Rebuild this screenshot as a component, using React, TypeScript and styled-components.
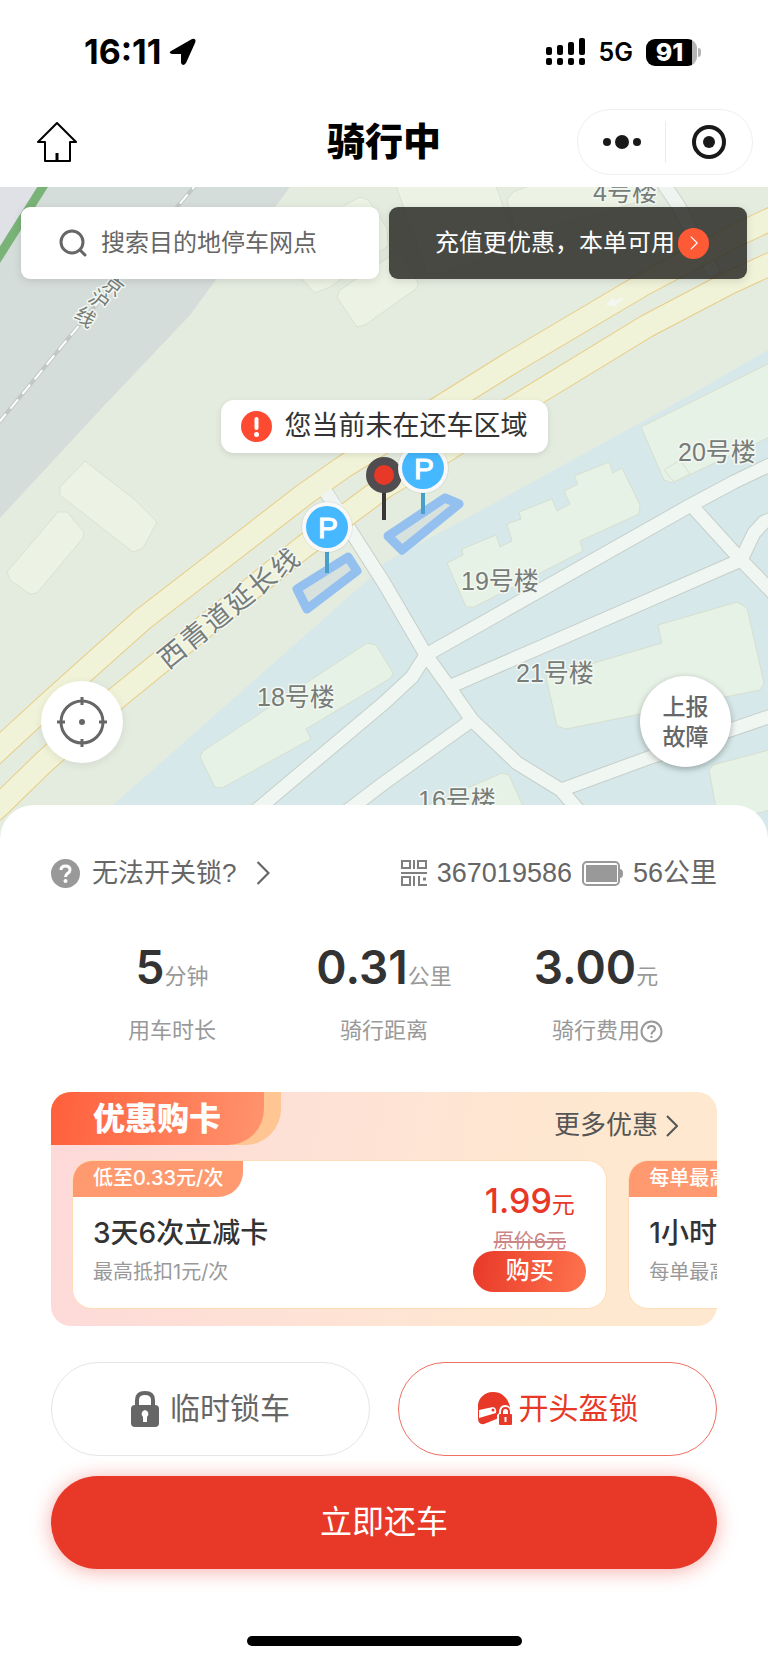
import React from 'react';
import styled, { createGlobalStyle, css } from 'styled-components';

const buildings = [
  '345,205 360,197 368,200 387,228 388,246 330,287 315,293 303,280 296,262',
  '337,297 340,290 392,255 401,255 418,283 417,288 365,325 357,327',
  '394,180 494,180 517,247 434,275 427,273',
  '507,200 513,192 545,180 662,180 656,197 517,236',
  '60,487 85,461 135,500 157,522 143,548 133,552 60,495',
  '7,572 58,512 67,512 84,532 83,538 37,593 30,594 10,580'
];

const blueBuildings = [
  '447,563 463,555 462,549 496,535 500,547 512,541 507,524 521,519 519,512 552,499 557,511 570,504 564,491 578,484 574,476 609,462 613,473 622,468 640,505 639,514 580,541 583,551 474,607 466,607',
  '641,427 780,358 780,432 672,483 664,480',
  '658,625 737,602 747,608 764,683 760,690 566,729 557,726 546,677 662,643',
  '709,770 713,765 780,747 780,807 719,824',
  '430,804 502,773 509,775 530,822 440,830',
  '200,757 203,751 367,643 376,645 393,673 391,678 306,729 311,739 222,788 215,787',
  '664,470 674,482 690,474 680,460'
];

const whiteRoads =
  'M320,483 L384,583 L426,655 L449,687 L472,720 L517,763 L561,790 L585,818 ' +
  'M426,655 L691,505 L734,482 L780,460 M449,687 L741,560 L754,533 L764,522 L780,516 ' +
  'M691,505 L741,560 L780,600 M426,655 L412,677 L384,703 L240,824 ' +
  'M472,720 L384,783 L330,824 M561,790 L651,757 L780,713';

const yellowRoads =
  'M-20,767 L0,748 L50,702 L88,668 L143,619 L305,494 L345,466 L429,414 L509,364 L644,284 L737,235 L790,210 ' +
  'M-20,822 L0,805 L43,763 L108,705 L157,665 L302,548 L384,487 L447,450 L506,412 L647,326 L729,283 L790,255';

const buildingLabels = [
  { text: '4号楼', x: 593, y: 201 },
  { text: '20号楼', x: 678, y: 461 },
  { text: '19号楼', x: 461, y: 590 },
  { text: '18号楼', x: 257, y: 706 },
  { text: '21号楼', x: 516, y: 682 },
  { text: '16号楼', x: 418, y: 809 }
];

const parkingPins = [
  { x: 423, y: 468 },
  { x: 327, y: 527 }
];

const stats = [
  { value: '5', unit: '分钟', label: '用车时长' },
  { value: '0.31', unit: '公里', label: '骑行距离' },
  { value: '3.00', unit: '元', label: '骑行费用', help: true }
];

const cards = [
  {
    tag: '低至0.33元/次',
    title: '3天6次立减卡',
    note: '最高抵扣1元/次',
    price: '1.99',
    original: '原价6元'
  },
  { tag: '每单最高减1元', title: '1小时畅骑卡', note: '每单最高减1元' }
];

const Chevron = ({ width = 12, height = 22 }) => (
  <svg
    width={width}
    height={height}
    viewBox="0 0 12 22"
    fill="none"
    stroke="currentColor"
    strokeWidth="2"
  >
    <path d="M1,1 L11,11 L1,21" />
  </svg>
);

const CityMap = () => (
  <MapDrawing viewBox="0 187 768 653" preserveAspectRatio="xMidYMin slice">
    <rect x="-100" y="180" width="1000" height="680" fill="#e4ebdf" />
    <polygon
      points="0,180 295,180 262,225 215,281 190,315 100,410 0,518"
      fill="#d5dddb"
    />
    <polygon points="0,180 42,180 0,250" fill="#e0e0e7" />
    <path d="M47,180 L-4,261" stroke="#79b377" strokeWidth="9" />
    <path
      d="M200,180 L177,207 L100,300 L-4,426"
      stroke="#c2c9c5"
      strokeWidth="4"
      fill="none"
    />
    <path
      d="M200,180 L177,207 L100,300 L-4,426"
      stroke="#fff"
      strokeWidth="2"
      strokeDasharray="12 7"
      fill="none"
    />
    <polygon
      points="780,343 687,397 500,500 384,563 370,578 113,805 60,850 780,850"
      fill="#d6e8e9"
    />
    <g fill="#ecf3e4" stroke="#dbe2d2" strokeWidth="1" strokeLinejoin="round">
      {buildings.map((points) => (
        <polygon key={points} points={points} />
      ))}
    </g>
    <g fill="#e7f2e6" stroke="#d6dfd0" strokeWidth="1" strokeLinejoin="round">
      {blueBuildings.map((points) => (
        <polygon key={points} points={points} />
      ))}
    </g>
    <g fill="none" strokeLinejoin="round">
      <path d={whiteRoads} stroke="#c6cfca" strokeWidth="15" />
      <path d={whiteRoads} stroke="#f0f6f1" strokeWidth="13" />
      <path d="M661,180 L678,205 L714,274" stroke="#cdd3cf" strokeWidth="15" />
      <path d="M661,180 L678,205 L714,274" stroke="#f0f4f1" strokeWidth="13" />
      <path d={yellowRoads} stroke="#e8cd85" strokeWidth="24" />
      <path d={yellowRoads} stroke="#f1f3d8" strokeWidth="22" />
      <path d="M326,492 L338,510" stroke="#f0f4f1" strokeWidth="13" />
    </g>
    <path
      d="M606,305 L613,297 L615,301 L622,297 L623,300 L616,304 L617,307 Z"
      fill="#f3f7f3"
    />
    <MapLabel>
      {buildingLabels.map(({ text, x, y }) => (
        <text key={text} x={x} y={y}>
          {text}
        </text>
      ))}
      <text
        transform="rotate(-39 229 609)"
        x="143 172 201 230 259 288"
        y="618"
        fontSize="27"
      >
        西青道延长线
      </text>
      <text x="101 87 73" y="286 300 317" rotate="36" fontSize="20">
        京沪线
      </text>
    </MapLabel>
    <g
      fill="rgba(200, 215, 225, 0.45)"
      stroke="#93c0ef"
      strokeWidth="9"
      strokeLinejoin="round"
    >
      <polygon points="297,589 348,557 357,571 307,609" />
      <polygon points="388,536 445,498 459,504 402,550" />
    </g>
    <path d="M384,490 V520" stroke="#39363a" strokeWidth="4" />
    <circle cx="384" cy="475" r="18" fill="#504c4f" />
    <circle cx="384" cy="475" r="10" fill="#e83828" />
    {parkingPins.map(({ x, y }) => (
      <g key={x}>
        <path d={`M${x},${y + 22} V${y + 46}`} stroke="#489fc9" strokeWidth="4" />
        <circle cx={x} cy={y} r="26" fill="#000" opacity="0.05" />
        <circle cx={x} cy={y} r="25" fill="#f8f8f8" />
        <circle cx={x} cy={y} r="21" fill="#45b8ff" />
        <PinText x={x + 1} y={y + 11}>
          P
        </PinText>
      </g>
    ))}
  </MapDrawing>
);

const App = () => (
  <>
    <GlobalStyle />
    <Page>
      <StatusBar>
        <StatusGroup>
          <Clock>16:11</Clock>
          <svg width="28" height="28" viewBox="0 0 28 28">
            <path
              d="M2,13 L23,1 Q28,0 26,5 L17,25 Q14,29 12,25 L12,16 L3,16 Q-1,15 2,13 Z"
              fill="#000"
            />
          </svg>
        </StatusGroup>
        <StatusGroup $gap={13}>
          <svg width="40" height="28" viewBox="0 0 40 28">
            <rect x="0" y="9" width="6" height="8" rx="2" />
            <rect x="11" y="7" width="6" height="10" rx="2" />
            <rect x="22" y="4" width="6" height="13" rx="2" />
            <rect x="33" y="0" width="6" height="17" rx="2" />
            {[0, 11, 22, 33].map((x) => (
              <rect key={x} x={x} y="20" width="6" height="7" rx="2" />
            ))}
          </svg>
          <Network>5G</Network>
          <Battery>91</Battery>
        </StatusGroup>
      </StatusBar>

      <NavBar>
        <HomeButton aria-label="首页">
          <svg
            width="40"
            height="40"
            viewBox="0 0 40 40"
            fill="none"
            stroke="#000"
            strokeWidth="2"
            strokeLinejoin="round"
          >
            <path d="M20,1 L39,20 H33 V39 H8 V20 H1 Z" />
            <path d="M20,31 V39" strokeWidth="3" />
          </svg>
        </HomeButton>
        <PageTitle>骑行中</PageTitle>
        <Capsule>
          <CapsuleButton aria-label="更多">
            <svg width="40" height="16" viewBox="0 0 40 16" fill="#191919">
              <circle cx="5" cy="8" r="4" />
              <circle cx="20" cy="8" r="7" />
              <circle cx="35" cy="8" r="4" />
            </svg>
          </CapsuleButton>
          <CapsuleButton aria-label="关闭">
            <svg width="36" height="36" viewBox="0 0 36 36">
              <circle
                cx="18"
                cy="18"
                r="15"
                fill="none"
                stroke="#191919"
                strokeWidth="4"
              />
              <circle cx="18" cy="18" r="6" fill="#191919" />
            </svg>
          </CapsuleButton>
        </Capsule>
      </NavBar>

      <MapArea>
        <CityMap />
        <TopActions>
          <SearchBox>
            <svg
              width="28"
              height="28"
              viewBox="0 0 28 28"
              fill="none"
              stroke="#666"
              strokeWidth="3"
              strokeLinecap="round"
            >
              <circle cx="13" cy="13" r="11" />
              <path d="M21,21 L26,26" />
            </svg>
            <SearchInput
              aria-label="搜索目的地停车网点"
              placeholder="搜索目的地停车网点"
            />
          </SearchBox>
          <PromoButton>
            充值更优惠，本单可用
            <PromoArrow>
              <Chevron width={8} height={14} />
            </PromoArrow>
          </PromoButton>
        </TopActions>
        <Notice>
          <svg width="31" height="31" viewBox="0 0 31 31">
            <circle cx="15.5" cy="15.5" r="15.5" fill="#fe4a30" />
            <path
              d="M15.5,8 V17"
              stroke="#fff"
              strokeWidth="4"
              strokeLinecap="round"
            />
            <circle cx="15.5" cy="23.5" r="2.5" fill="#fff" />
          </svg>
          您当前未在还车区域
        </Notice>
        <MapTools>
          <LocateButton aria-label="定位">
            <svg
              width="50"
              height="50"
              viewBox="0 0 50 50"
              fill="none"
              stroke="#666"
              strokeWidth="3"
            >
              <circle cx="25" cy="25" r="21" />
              <path d="M25,0 V8 M25,42 V50 M0,25 H8 M42,25 H50" />
              <circle cx="25" cy="25" r="3" fill="#666" stroke="none" />
            </svg>
          </LocateButton>
          <ReportButton>
            上报
            <br />
            故障
          </ReportButton>
        </MapTools>
      </MapArea>

      <Sheet>
        <InfoRow>
          <HelpLink href="#help">
            <svg width="29" height="29" viewBox="0 0 29 29">
              <circle cx="14.5" cy="14.5" r="14.5" fill="#999" />
              <path
                d="M10,11 Q10,7 14.5,7 Q19,7 19,11 Q19,13 16.5,14.5 Q14.5,16 14.5,18"
                fill="none"
                stroke="#fff"
                strokeWidth="3"
              />
              <circle cx="14.5" cy="22" r="2" fill="#fff" />
            </svg>
            <span>无法开关锁?</span>
            <HelpArrow>
              <Chevron width={14} height={24} />
            </HelpArrow>
          </HelpLink>
          <BikeInfo>
            <svg
              width="26"
              height="26"
              viewBox="0 0 26 26"
              fill="none"
              stroke="#808080"
              strokeWidth="2"
            >
              <path d="M1,1 H9 V8 H1 Z M17,1 H25 V8 H17 Z M1,17 H9 V25 H1 Z" />
              <path d="M13,0 V9 M0,13 H26 M13,16 V26 M18,16 V25 H26" />
              <path d="M22,19 H25" strokeWidth="3" />
            </svg>
            <span>367019586</span>
            <svg width="41" height="25" viewBox="0 0 41 25">
              <rect
                x="1"
                y="1"
                width="36"
                height="23"
                rx="4"
                fill="none"
                stroke="#999"
                strokeWidth="2"
              />
              <rect x="4" y="4" width="31" height="17" fill="#999" />
              <path d="M38,8 Q41,8 41,12.5 Q41,17 38,17 Z" fill="#999" />
            </svg>
            <span>56公里</span>
          </BikeInfo>
        </InfoRow>

        <Stats>
          {stats.map(({ value, unit, label, help }) => (
            <Stat key={label}>
              <StatValue>
                <strong>{value}</strong>
                {unit}
              </StatValue>
              <StatLabel>
                {label}
                {help && (
                  <FeeHelp aria-label="费用说明">
                    <svg
                      width="23"
                      height="23"
                      viewBox="0 0 23 23"
                      fill="none"
                      stroke="#999"
                      strokeWidth="2"
                    >
                      <circle cx="11.5" cy="11.5" r="10" />
                      <path d="M8,9 Q8,6 11.5,6 Q15,6 15,9 Q15,10.5 13,11.5 Q11.5,12.5 11.5,14.5 M11.5,16 V18" />
                    </svg>
                  </FeeHelp>
                )}
              </StatLabel>
            </Stat>
          ))}
        </Stats>

        <Deals>
          <DealsHeader>
            <DealsTabShade>
              <DealsTab>优惠购卡</DealsTab>
            </DealsTabShade>
            <MoreLink href="#deals">
              更多优惠
              <Chevron width={12} height={22} />
            </MoreLink>
          </DealsHeader>
          <CardList>
            {cards.map((card) => (
              <Card key={card.title}>
                <CardText>
                  <CardTag>{card.tag}</CardTag>
                  <CardTitle>{card.title}</CardTitle>
                  <CardNote>{card.note}</CardNote>
                </CardText>
                {card.price && (
                  <CardOffer>
                    <Price>
                      <strong>{card.price}</strong>元
                    </Price>
                    <OriginalPrice>{card.original}</OriginalPrice>
                    <BuyButton>购买</BuyButton>
                  </CardOffer>
                )}
              </Card>
            ))}
          </CardList>
        </Deals>

        <Actions>
          <OutlineButton>
            <svg width="28" height="36" viewBox="0 0 28 36">
              <path
                d="M6,16 V9 Q6,2 14,2 Q22,2 22,9 V16"
                fill="none"
                stroke="#666"
                strokeWidth="4"
              />
              <rect y="14" width="28" height="22" rx="4" fill="#666" />
              <path
                d="M14,19 a4,4 0 0 1 2,7 V31 H12 V26 a4,4 0 0 1 2,-7 Z"
                fill="#fff"
              />
            </svg>
            临时锁车
          </OutlineButton>
          <OutlineButton $primary>
            <svg width="36" height="34" viewBox="0 0 36 34">
              <path
                d="M1,16 C0,7 7,0 16,0 C25,0 31,6 33,15 L22,26 L7,32 Q1,33 1,26 Z"
                fill="#e83828"
              />
              <path d="M2,18 L16,15 Q20,16 19,21 L2,26 Z" fill="#fff" />
              <circle cx="16" cy="18" r="1.5" fill="#e83828" />
              <path
                d="M20,34 V23 L22,21 Q22,13 28,13 Q34,13 34,21 L36,22 V34 Z"
                fill="#fff"
              />
              <path
                d="M25,23 V20 Q25,16 28.5,16 Q32,16 32,20 V23"
                fill="none"
                stroke="#e83828"
                strokeWidth="2"
              />
              <rect x="22" y="22" width="13" height="11" rx="1" fill="#e83828" />
              <path d="M28.5,25 V30" stroke="#fff" strokeWidth="2" />
            </svg>
            开头盔锁
          </OutlineButton>
        </Actions>
        <ReturnButton>立即还车</ReturnButton>
        <HomeIndicator />
      </Sheet>
    </Page>
  </>
);

export default App;

const GlobalStyle = createGlobalStyle`
  * {
    box-sizing: border-box;
  }
  body {
    margin: 0;
    background: #fff;
    font-family: 'Liberation Sans', 'Noto Sans CJK SC', sans-serif;
    line-height: 1.2;
    color: #333;
  }
  button,
  input {
    font-family: inherit;
    line-height: inherit;
    border: none;
    padding: 0;
    margin: 0;
    background: none;
  }
  a {
    color: inherit;
    text-decoration: none;
  }
  svg {
    display: block;
    flex-shrink: 0;
  }
`;

const Page = styled.div`
  display: flex;
  flex-direction: column;
  min-height: 100vh;
`;

const StatusBar = styled.header`
  display: flex;
  align-items: center;
  justify-content: space-between;
  height: 96px;
  padding: 8px 71px 0 84px;
`;

const StatusGroup = styled.div<{ $gap?: number }>`
  display: flex;
  align-items: center;
  gap: ${(props) => props.$gap ?? 8}px;
`;

const Clock = styled.span`
  font-family: Inter, sans-serif;
  font-size: 34px;
  font-weight: 700;
  color: #000;
`;

const Network = styled.span`
  font-family: Inter, sans-serif;
  font-size: 25px;
  font-weight: 600;
  color: #000;
`;

const Battery = styled.div`
  position: relative;
  width: 51px;
  height: 27px;
  padding-right: 4px;
  border-radius: 9px;
  background: linear-gradient(90deg, #000 46px, #b5b5b5 46px);
  color: #fff;
  font-family: Inter, sans-serif;
  font-size: 25px;
  font-weight: 800;
  line-height: 27px;
  text-align: center;

  &::after {
    content: '';
    position: absolute;
    top: 9px;
    left: 52px;
    width: 3px;
    height: 9px;
    border-radius: 0 4px 4px 0;
    background: #b5b5b5;
  }
`;

const NavBar = styled.nav`
  display: grid;
  grid-template-columns: 1fr auto 1fr;
  align-items: center;
  height: 91px;
  padding: 0 15px;
`;

const HomeButton = styled.button`
  justify-self: start;
  margin-left: 22px;
`;

const PageTitle = styled.h1`
  margin: 0;
  font-size: 38px;
  font-weight: 900;
  line-height: 48px;
  color: #000;
`;

const Capsule = styled.div`
  justify-self: end;
  display: grid;
  grid-template-columns: 1fr 1fr;
  align-items: center;
  width: 176px;
  height: 66px;
  border: 1px solid #efefef;
  border-radius: 33px;
`;

const CapsuleButton = styled.button`
  display: flex;
  align-items: center;
  justify-content: center;
  height: 42px;

  & + & {
    border-left: 1px solid #ececec;
  }
`;

const MapArea = styled.section`
  position: relative;
  display: flex;
  flex-direction: column;
  height: 653px;
  padding: 20px 21px 0;
  overflow: hidden;
`;

const MapDrawing = styled.svg`
  position: absolute;
  top: 0;
  left: 0;
  width: 100%;
  height: 100%;
`;

const MapLabel = styled.g`
  font-size: 25px;
  fill: #767c78;
  stroke: #f2f7f1;
  stroke-width: 3px;
  stroke-linejoin: round;
  paint-order: stroke;
`;

const PinText = styled.text`
  font-size: 30px;
  fill: #fff;
  stroke: #fff;
  stroke-width: 1px;
  text-anchor: middle;
`;

const TopActions = styled.div`
  position: relative;
  display: grid;
  grid-template-columns: repeat(2, minmax(0, 1fr));
  gap: 10px;
`;

const topBox = css`
  display: flex;
  align-items: center;
  height: 72px;
  border-radius: 9px;
  font-size: 24px;
  box-shadow: 0 2px 8px rgba(0, 0, 0, 0.12);
`;

const SearchBox = styled.label`
  ${topBox}
  gap: 14px;
  padding: 0 20px 0 38px;
  background: #fff;
`;

const SearchInput = styled.input`
  flex: 1;
  min-width: 0;
  height: 36px;
  font-size: 24px;
  color: #333;
  outline: none;

  &::placeholder {
    color: #666;
    opacity: 1;
  }
`;

const PromoButton = styled.button`
  ${topBox}
  justify-content: center;
  gap: 3px;
  padding-left: 8px;
  color: #fff;
  background: rgba(40, 40, 36, 0.84);
`;

const PromoArrow = styled.span`
  display: flex;
  align-items: center;
  justify-content: center;
  width: 31px;
  height: 31px;
  border-radius: 50%;
  background: #ff5a36;
`;

const Notice = styled.div`
  position: relative;
  align-self: center;
  display: flex;
  align-items: center;
  gap: 13px;
  height: 53px;
  margin-top: 121px;
  padding: 0 20px;
  border-radius: 13px;
  background: #fff;
  font-size: 27px;
  box-shadow: 0 2px 6px rgba(0, 0, 0, 0.1);
`;

const MapTools = styled.div`
  position: relative;
  display: flex;
  align-items: center;
  justify-content: space-between;
  margin-top: 223px;
  padding: 0 16px 0 20px;
`;

const roundButton = css`
  display: flex;
  align-items: center;
  justify-content: center;
  border-radius: 50%;
  background: #fff;
  color: #666;
`;

const LocateButton = styled.button`
  ${roundButton}
  width: 82px;
  height: 82px;
  box-shadow: 0 2px 10px rgba(0, 0, 0, 0.08);
`;

const ReportButton = styled.button`
  ${roundButton}
  width: 91px;
  height: 91px;
  font-size: 23px;
  font-weight: 500;
  line-height: 30px;
  box-shadow: 0 2px 6px rgba(0, 0, 0, 0.3);
`;

const Sheet = styled.main`
  position: relative;
  display: flex;
  flex-direction: column;
  margin-top: -35px;
  padding: 50px 51px 17px;
  border-radius: 34px 34px 0 0;
  background: #fff;
`;

const InfoRow = styled.div`
  display: flex;
  align-items: center;
  justify-content: space-between;
  height: 36px;
  font-size: 27px;
  line-height: 36px;
  color: #666;
`;

const HelpLink = styled.a`
  display: flex;
  align-items: center;
  gap: 12px;
  font-size: 26px;
`;

const HelpArrow = styled.span`
  margin-left: 8px;
`;

const BikeInfo = styled.div`
  display: flex;
  align-items: center;
  gap: 10px;
`;

const Stats = styled.div`
  display: grid;
  grid-template-columns: repeat(3, 1fr);
  margin-top: 48px;
  padding: 0 15px;
  color: #999;
`;

const Stat = styled.div`
  display: flex;
  flex-direction: column;
  align-items: center;
  gap: 20px;
`;

const StatValue = styled.div`
  height: 56px;
  font-size: 22px;
  line-height: 56px;

  strong {
    font-family: Inter, sans-serif;
    font-size: 46px;
    font-weight: 600;
    color: #333;
  }
`;

const StatLabel = styled.div`
  position: relative;
  font-size: 22px;
  line-height: 32px;
`;

const FeeHelp = styled.button`
  position: absolute;
  top: 5px;
  left: 100%;
`;

const Deals = styled.section`
  margin-top: 45px;
  padding-bottom: 17px;
  border-radius: 20px;
  overflow: hidden;
  background: linear-gradient(100deg, #fdd9d9, #fee3d5 45%, #fee8cf 80%);
`;

const DealsHeader = styled.div`
  display: flex;
  justify-content: space-between;
  height: 68px;
`;

const DealsTabShade = styled.div`
  height: 53px;
  padding-right: 17px;
  border-bottom-right-radius: 36px;
  background: #ffc592;
`;

const DealsTab = styled.h2`
  height: 53px;
  margin: 0;
  padding: 0 43px 0 42px;
  border-bottom-right-radius: 36px;
  background: linear-gradient(100deg, #ff5f3c, #ff946e);
  color: #fff;
  font-size: 32px;
  font-weight: 900;
  line-height: 54px;
`;

const MoreLink = styled.a`
  display: flex;
  align-items: center;
  gap: 8px;
  padding-right: 39px;
  font-size: 26px;
  color: #555;
`;

const CardList = styled.div`
  display: flex;
  gap: 21px;
  padding-left: 21px;
  overflow: hidden;
`;

const Card = styled.article`
  display: flex;
  flex: 0 0 83%;
  justify-content: space-between;
  height: 149px;
  border: 1px solid #ffdcb8;
  border-radius: 20px;
  overflow: hidden;
  background: #fff;
  font-family: Inter, 'Noto Sans CJK SC', sans-serif;
`;

const CardText = styled.div`
  display: flex;
  flex-direction: column;
  align-items: flex-start;
`;

const CardTag = styled.div`
  height: 36px;
  padding: 0 20px;
  border-bottom-right-radius: 25px;
  background: #ff9a70;
  color: #fff;
  font-size: 20px;
  font-weight: 500;
  line-height: 35px;
`;

const CardTitle = styled.h3`
  margin: 17px 0 0 20px;
  font-size: 28px;
  font-weight: 500;
  line-height: 38px;
`;

const CardNote = styled.div`
  margin: 6px 0 0 20px;
  font-size: 20px;
  line-height: 28px;
  color: #999;
`;

const CardOffer = styled.div`
  display: flex;
  flex-direction: column;
  align-items: center;
  justify-content: flex-end;
  margin-right: 20px;
  padding-bottom: 16px;
`;

const Price = styled.div`
  font-size: 23px;
  line-height: 40px;
  color: #e83828;

  strong {
    font-size: 34px;
    font-weight: 500;
  }
`;

const OriginalPrice = styled.s`
  margin-top: 6px;
  font-size: 20px;
  line-height: 20px;
  color: #cc8585;
`;

const BuyButton = styled.button`
  width: 113px;
  height: 41px;
  border-radius: 21px;
  background: linear-gradient(100deg, #e83828, #ff744e);
  color: #fff;
  font-size: 24px;
  font-weight: 500;
`;

const Actions = styled.div`
  display: grid;
  grid-template-columns: 1fr 1fr;
  gap: 28px;
  margin-top: 36px;
`;

const OutlineButton = styled.button<{ $primary?: boolean }>`
  display: flex;
  align-items: center;
  justify-content: center;
  gap: ${(props) => (props.$primary ? 6 : 11)}px;
  height: 94px;
  border: 1px solid ${(props) => (props.$primary ? '#ee6f63' : '#e6e6e6')};
  border-radius: 47px;
  color: ${(props) => (props.$primary ? '#e83828' : '#666')};
  font-size: 30px;
`;

const ReturnButton = styled.button`
  height: 93px;
  margin-top: 20px;
  border-radius: 47px;
  background: #e83828;
  color: #fff;
  font-size: 32px;
  box-shadow: 0 2px 20px rgba(232, 56, 40, 0.4);
`;

const HomeIndicator = styled.div`
  align-self: center;
  width: 275px;
  height: 10px;
  margin-top: 67px;
  border-radius: 5px;
  background: #000;
`;
